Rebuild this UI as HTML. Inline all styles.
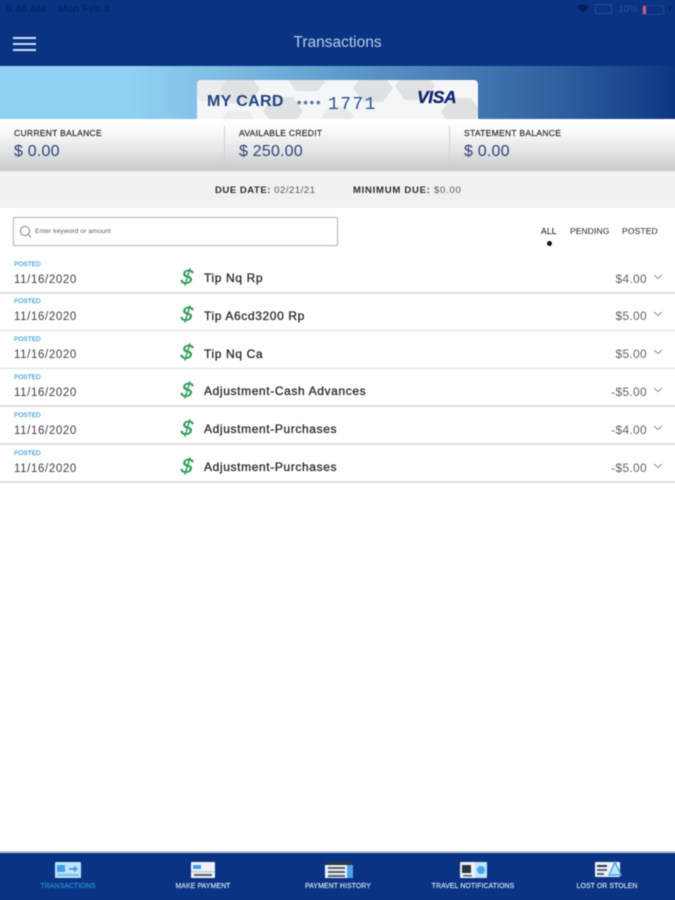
<!DOCTYPE html>
<html lang="en">
<head>
<meta charset="utf-8">
<title>Transactions</title>
<style>
html,body{margin:0;padding:0;background:#fff;width:675px;height:900px;overflow:hidden}
#p{position:relative;width:675px;height:900px;background:#fff;font-family:"Liberation Sans",sans-serif;filter:blur(.45px)}
#p div,#p svg{position:absolute}
.t{white-space:nowrap;line-height:1}
.lab{font-size:8.5px;font-weight:400;color:#2a2d33;letter-spacing:.3px;-webkit-text-stroke:.2px #2a2d33}
.bal{font-size:16px;color:#2e4277;letter-spacing:.2px}
.row{left:0;width:675px;height:38px}
.post{left:14px;top:2px;font-size:6.5px;color:#3d9fe0;-webkit-text-stroke:.15px #3d9fe0}
.date{left:14px;top:15px;font-size:11.5px;color:#3c3f44;letter-spacing:.62px}
.name{left:204px;top:12.5px;font-size:12px;font-weight:400;color:#26282c;letter-spacing:.62px;-webkit-text-stroke:.3px #26282c}
.amt{right:28px;top:13px;font-size:12px;color:#5f6368;letter-spacing:.3px}
.line{left:-5px;top:32.5px;width:685px;height:1.5px;background:#dcdedf}
.dol{left:180.5px;top:7px;font-style:italic;font-weight:400;font-size:21px;line-height:1;color:#2f9a58;-webkit-text-stroke:.3px #2f9a58;transform:skewX(-6deg)}
.chev{left:653px;top:14px}
.nav{top:883.5px;font-size:6.9px;color:#d9e3f2;text-align:center;width:134px;-webkit-text-stroke:.15px #d9e3f2;letter-spacing:.1px}
</style>
</head>
<body>
<div id="p">
  <div style="left:-5px;top:-5px;width:685px;height:71px;background:#0a3384"></div>
  <div class="t" style="left:6px;top:4px;font-size:10.5px;color:#021f5c;letter-spacing:.2px">9:48 AM</div>
  <div class="t" style="left:58px;top:4px;font-size:10.5px;color:#021f5c;letter-spacing:.2px">Mon Feb 8</div>

  <svg style="left:576px;top:3px" width="14" height="11" viewBox="0 0 14 11"><path d="M1 3.5Q7-.8 13 3.5L7 10Z" fill="#021f5c"/></svg>
  <div style="left:595px;top:4px;width:15px;height:8px;border:1px solid #2b4d93;border-radius:1px"></div>
  <div class="t" style="left:618px;top:4.5px;font-size:10px;color:#2f4f95">10%</div>
  <div style="left:642px;top:5px;width:20px;height:8px;border:1px solid #234589;border-radius:2px"></div>
  <div style="left:643px;top:6px;width:3px;height:8px;background:#d9557a"></div>
  <div style="left:669px;top:6px;width:2px;height:5px;background:#021f5c"></div>

  <div style="left:13px;top:36.7px;width:23px;height:2.6px;background:#cfe3f4"></div>
  <div style="left:13px;top:42.7px;width:23px;height:2.6px;background:#cfe3f4"></div>
  <div style="left:13px;top:48.7px;width:23px;height:2.6px;background:#cfe3f4"></div>
  <div class="t" style="left:0;top:35px;width:675px;text-align:center;font-size:15.5px;color:#b5cde6">Transactions</div>

  <div style="left:-5px;top:66px;width:685px;height:53px;background:linear-gradient(90deg,#8fd1f2 0,#8fd1f2 20%,#7fbde3 33%,#5f9ccc 50%,#3f74ae 72%,#2a5a9b 85%,#0b3482 100%)"></div>

  <div style="left:197px;top:80px;width:281px;height:40px;background:#f5f6f7;border-radius:4px 4px 0 0;overflow:hidden">
    <svg style="left:0;top:0" width="281" height="40" viewBox="0 0 281 40" fill="#dfe1e3">
      <path d="M-7 7l10-14h20l10 14-10 14H3Z" opacity=".5"/>
      <path d="M23 9l10-14h20l10 14-10 14H33Z"/>
      <path d="M66 31l10-14h20l10 14-10 14H76Z"/>
      <path d="M92 2l8-11h20l8 11-8 9h-20Z"/>
      <path d="M23 42l8-11h20l8 11Z" opacity=".5"/>
      <path d="M156 8l10-14h20l10 14-10 14h-20Z"/>
      <path d="M198 6l10-14h20l10 14-10 14h-20Z"/>
      <path d="M244 32l10-14h20l10 14-10 14h-20Z"/>
      <path d="M125 36l8-9h16l8 9-8 9h-16Z" opacity=".6"/>
    </svg>
    <div class="t" style="left:10px;top:14px;font-size:16px;font-weight:700;color:#1f4382;letter-spacing:.35px">MY CARD</div>
    <div class="t" style="left:100px;top:20px;font-size:11px;font-weight:700;color:#3b5d95;letter-spacing:2.1px">****</div>
    <div class="t" style="left:131px;top:16px;font-family:'Liberation Mono',monospace;font-size:18px;color:#2a5490;letter-spacing:1.4px">1771</div>
    <div class="t" style="left:220px;top:9px;font-size:17.5px;font-weight:700;font-style:italic;color:#14246f;letter-spacing:-.4px;-webkit-text-stroke:.3px #14246f">VISA</div>
  </div>

  <div style="left:-5px;top:119px;width:685px;height:52px;background:linear-gradient(180deg,#fff 0,#fbfbfc 22%,#e2e4e6 62%,#c6c9cb 100%)"></div>
  <div style="left:224px;top:126px;width:1px;height:39px;background:#cfd2d4"></div>
  <div style="left:449px;top:126px;width:1px;height:39px;background:#cfd2d4"></div>
  <div class="t lab" style="left:14px;top:129px">CURRENT BALANCE</div>
  <div class="t bal" style="left:14px;top:144px">$ 0.00</div>
  <div class="t lab" style="left:239px;top:129px">AVAILABLE CREDIT</div>
  <div class="t bal" style="left:239px;top:144px">$ 250.00</div>
  <div class="t lab" style="left:464px;top:129px">STATEMENT BALANCE</div>
  <div class="t bal" style="left:464px;top:144px">$ 0.00</div>

  <div style="left:-5px;top:171px;width:685px;height:37px;background:#eff1f3"></div>
  <div class="t" style="left:215px;top:186px;font-size:9.5px;color:#55585d;letter-spacing:.55px"><span style="font-weight:700;color:#2b2d31">DUE DATE:</span> 02/21/21</div>
  <div class="t" style="left:353px;top:186px;font-size:9.5px;color:#55585d;letter-spacing:.75px"><span style="font-weight:700;color:#2b2d31">MINIMUM DUE:</span> $0.00</div>

  <div style="left:13px;top:217px;width:323px;height:27px;border:1px solid #b4b8bb;border-radius:2px;box-shadow:0 0 1px #bbb;background:#fff"></div>
  <svg style="left:19px;top:225px" width="13" height="14" viewBox="0 0 13 14" fill="none" stroke="#81868b" stroke-width="1"><circle cx="6" cy="6" r="4.6"/><path d="M9.4 9.6L12 12.5"/></svg>
  <div class="t" style="left:35px;top:229px;font-size:6.6px;color:#5c6066;letter-spacing:.1px">Enter keyword or amount</div>

  <div class="t" style="left:541px;top:227px;font-size:8.5px;color:#2b2d31;-webkit-text-stroke:.15px #2b2d31;letter-spacing:.2px">ALL</div>
  <div style="left:546.5px;top:241px;width:5px;height:5px;border-radius:50%;background:#111"></div>
  <div class="t" style="left:570px;top:227px;font-size:8.5px;color:#3a3c40;-webkit-text-stroke:.1px #3a3c40;letter-spacing:.1px">PENDING</div>
  <div class="t" style="left:622px;top:227px;font-size:8.5px;color:#3a3c40;-webkit-text-stroke:.1px #3a3c40;letter-spacing:.15px">POSTED</div>

  <div class="row" style="top:259.5px"><div class="t post">POSTED</div><div class="t date">11/16/2020</div><div class="dol t">$</div><div class="t name">Tip Nq Rp</div><div class="t amt">$4.00</div><svg class="chev" width="10" height="6" viewBox="0 0 10 6" fill="none" stroke="#8a8e92"><path d="M1 1l4 3.5L9 1"/></svg><div class="line"></div></div>
  <div class="row" style="top:297.3px"><div class="t post">POSTED</div><div class="t date">11/16/2020</div><div class="dol t">$</div><div class="t name">Tip A6cd3200 Rp</div><div class="t amt">$5.00</div><svg class="chev" width="10" height="6" viewBox="0 0 10 6" fill="none" stroke="#8a8e92"><path d="M1 1l4 3.5L9 1"/></svg><div class="line"></div></div>
  <div class="row" style="top:335.1px"><div class="t post">POSTED</div><div class="t date">11/16/2020</div><div class="dol t">$</div><div class="t name">Tip Nq Ca</div><div class="t amt">$5.00</div><svg class="chev" width="10" height="6" viewBox="0 0 10 6" fill="none" stroke="#8a8e92"><path d="M1 1l4 3.5L9 1"/></svg><div class="line"></div></div>
  <div class="row" style="top:372.9px"><div class="t post">POSTED</div><div class="t date">11/16/2020</div><div class="dol t">$</div><div class="t name">Adjustment-Cash Advances</div><div class="t amt">-$5.00</div><svg class="chev" width="10" height="6" viewBox="0 0 10 6" fill="none" stroke="#8a8e92"><path d="M1 1l4 3.5L9 1"/></svg><div class="line"></div></div>
  <div class="row" style="top:410.7px"><div class="t post">POSTED</div><div class="t date">11/16/2020</div><div class="dol t">$</div><div class="t name">Adjustment-Purchases</div><div class="t amt">-$4.00</div><svg class="chev" width="10" height="6" viewBox="0 0 10 6" fill="none" stroke="#8a8e92"><path d="M1 1l4 3.5L9 1"/></svg><div class="line"></div></div>
  <div class="row" style="top:448.5px"><div class="t post">POSTED</div><div class="t date">11/16/2020</div><div class="dol t">$</div><div class="t name">Adjustment-Purchases</div><div class="t amt">-$5.00</div><svg class="chev" width="10" height="6" viewBox="0 0 10 6" fill="none" stroke="#8a8e92"><path d="M1 1l4 3.5L9 1"/></svg><div class="line"></div></div>

  <div style="left:-5px;top:851px;width:685px;height:2px;background:#b9c3d6"></div>
  <div style="left:-5px;top:853px;width:685px;height:52px;background:#0a3384"></div>

  <svg style="left:55px;top:862px" width="26" height="16" viewBox="0 0 26 16"><rect width="26" height="16" rx="1" fill="#bfe3fb"/><rect x="2" y="3" width="8" height="7" fill="#3f9fe6"/><path d="M14 6h5V3.5l4 3.5-4 3.5V8h-5Z" fill="#3f9fe6"/><rect x="2" y="12" width="22" height="2" fill="#7fbfe8"/></svg>
  <svg style="left:191px;top:862px" width="24" height="16" viewBox="0 0 24 16"><rect width="24" height="16" rx="1" fill="#eef2f6"/><rect x="2" y="3" width="8" height="4" fill="#3f9fe6"/><rect y="9" width="24" height="1.5" fill="#c5ccd6"/><rect x="3" y="12" width="18" height="2" fill="#56606e"/></svg>
  <svg style="left:325px;top:862px" width="28" height="16" viewBox="0 0 28 16"><rect width="28" height="16" fill="#eef2f6"/><rect width="28" height="3" fill="#2e3440"/><path d="M3 5h17v2H3ZM3 9h17v2H3ZM3 13h17v2H3Z" fill="#56606e"/><rect x="22" y="3" width="6" height="13" fill="#4aa3ea"/></svg>
  <svg style="left:460px;top:862px" width="27" height="16" viewBox="0 0 27 16"><rect width="27" height="16" rx="1" fill="#eef2f6"/><rect x="2" y="3" width="9" height="8" fill="#2e3440"/><rect x="15" y="0" width="12" height="16" rx="1" fill="#bfe3fb"/><circle cx="21" cy="8" r="4" fill="#4aa3ea"/><rect x="3" y="13" width="9" height="1.5" fill="#56606e"/></svg>
  <svg style="left:595px;top:861px" width="27" height="17" viewBox="0 0 27 17"><rect y="1" width="25" height="15" rx="1" fill="#eef2f6"/><rect x="2" y="4" width="10" height="2" fill="#2e3440"/><rect x="2" y="8" width="10" height="2" fill="#56606e"/><rect x="2" y="12" width="7" height="2" fill="#56606e"/><path d="M20 1l6 13h-12Z" fill="#bfe3fb" stroke="#4aa3ea" stroke-width="1.4"/></svg>

  <div class="t nav" style="left:1px;color:#2c92dd;-webkit-text-stroke:.15px #2c92dd">TRANSACTIONS</div>
  <div class="t nav" style="left:136px">MAKE PAYMENT</div>
  <div class="t nav" style="left:271px">PAYMENT HISTORY</div>
  <div class="t nav" style="left:406px">TRAVEL NOTIFICATIONS</div>
  <div class="t nav" style="left:540px">LOST OR STOLEN</div>
</div>
</body>
</html>
